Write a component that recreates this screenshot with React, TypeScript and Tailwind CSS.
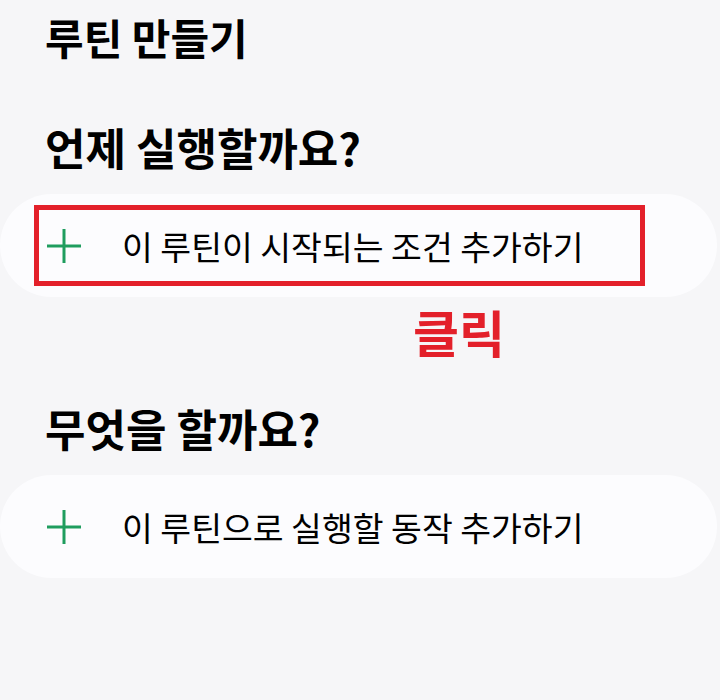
import React from 'react';

const PlusIcon: React.FC = () => (
  <svg width="34" height="34" viewBox="0 0 34 34" className="shrink-0">
    <path d="M17 0v34M0 17h34" stroke="#1f9d5e" strokeWidth="3" />
  </svg>
);

const AddRow: React.FC<{ label: string; highlight?: boolean }> = ({ label, highlight }) => (
  <div className="h-[103px] mr-[3px] rounded-full bg-[#fcfcfe] flex items-center">
    <div
      className={`flex items-center h-[81px] ml-[34px] ${
        highlight ? 'w-[611px] border-[5px] border-[#e3202a]' : 'border-[5px] border-transparent'
      }`}
    >
      <div className="ml-[8px]">
        <PlusIcon />
      </div>
      <span className="ml-[41px] text-[33.5px] text-black leading-none">{label}</span>
    </div>
  </div>
);

const App: React.FC = () => {
  return (
    <div
      className="w-[720px] h-[700px] bg-[#f6f6f8] overflow-hidden flex flex-col"
      style={{ fontFamily: '"Noto Sans CJK KR", "Noto Sans", sans-serif' }}
    >
      <h1 className="ml-[45px] mt-[10px] text-[42px] font-bold leading-[54px] text-black">루틴 만들기</h1>

      <h2 className="ml-[45px] mt-[56px] text-[44px] font-bold leading-[54px] text-black">언제 실행할까요?</h2>

      <div className="mt-[20px]">
        <AddRow label="이 루틴이 시작되는 조건 추가하기" highlight />
      </div>

      <div className="ml-[413px] mt-[4px] text-[50px] font-bold leading-[60px] text-[#e3202a]">클릭</div>

      <h2 className="ml-[45px] mt-[40px] text-[44px] font-bold leading-[54px] text-black">무엇을 할까요?</h2>

      <div className="mt-[20px]">
        <AddRow label="이 루틴으로 실행할 동작 추가하기" />
      </div>
    </div>
  );
};

export default App;
